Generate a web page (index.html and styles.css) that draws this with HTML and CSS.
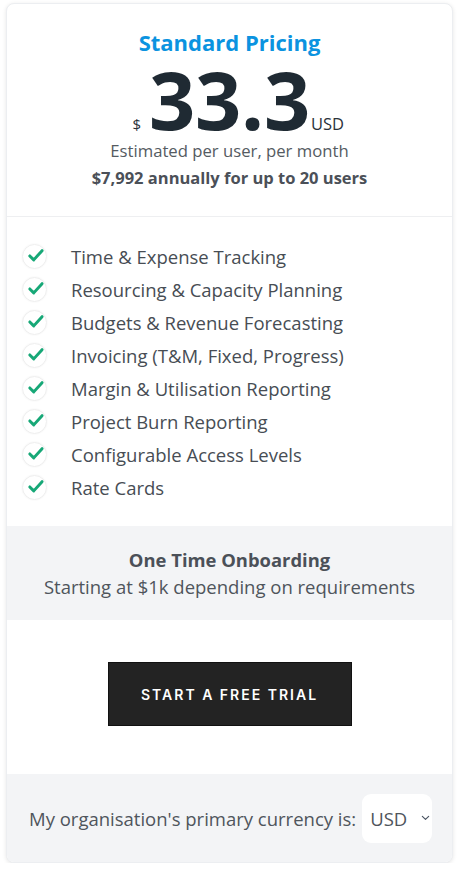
FILE: index.html
```html
<!DOCTYPE html>
<html lang="en">
<head>
<meta charset="utf-8">
<title>Standard Pricing</title>
<link rel="stylesheet" href="styles.css">
</head>
<body>
<div class="card">
  <section class="head">
    <h2 class="title">Standard Pricing</h2>
    <div class="price"><span class="cur">$</span><span class="amount">33.3</span><span class="code">USD</span></div>
    <p class="per">Estimated per user, per month</p>
    <p class="annual">$7,992 annually for up to 20 users</p>
  </section>
  <ul class="features">
    <li><span class="chk"><svg viewBox="0 0 24 24" width="24" height="24"><path d="M5.5 12.5 L10 17 L19.5 6.5" fill="none" stroke="#17a877" stroke-width="3.4" stroke-linecap="round" stroke-linejoin="round"/></svg></span>Time &amp; Expense Tracking</li>
    <li><span class="chk"><svg viewBox="0 0 24 24" width="24" height="24"><path d="M5.5 12.5 L10 17 L19.5 6.5" fill="none" stroke="#17a877" stroke-width="3.4" stroke-linecap="round" stroke-linejoin="round"/></svg></span>Resourcing &amp; Capacity Planning</li>
    <li><span class="chk"><svg viewBox="0 0 24 24" width="24" height="24"><path d="M5.5 12.5 L10 17 L19.5 6.5" fill="none" stroke="#17a877" stroke-width="3.4" stroke-linecap="round" stroke-linejoin="round"/></svg></span>Budgets &amp; Revenue Forecasting</li>
    <li><span class="chk"><svg viewBox="0 0 24 24" width="24" height="24"><path d="M5.5 12.5 L10 17 L19.5 6.5" fill="none" stroke="#17a877" stroke-width="3.4" stroke-linecap="round" stroke-linejoin="round"/></svg></span>Invoicing (T&amp;M, Fixed, Progress)</li>
    <li><span class="chk"><svg viewBox="0 0 24 24" width="24" height="24"><path d="M5.5 12.5 L10 17 L19.5 6.5" fill="none" stroke="#17a877" stroke-width="3.4" stroke-linecap="round" stroke-linejoin="round"/></svg></span>Margin &amp; Utilisation Reporting</li>
    <li><span class="chk"><svg viewBox="0 0 24 24" width="24" height="24"><path d="M5.5 12.5 L10 17 L19.5 6.5" fill="none" stroke="#17a877" stroke-width="3.4" stroke-linecap="round" stroke-linejoin="round"/></svg></span>Project Burn Reporting</li>
    <li><span class="chk"><svg viewBox="0 0 24 24" width="24" height="24"><path d="M5.5 12.5 L10 17 L19.5 6.5" fill="none" stroke="#17a877" stroke-width="3.4" stroke-linecap="round" stroke-linejoin="round"/></svg></span>Configurable Access Levels</li>
    <li><span class="chk"><svg viewBox="0 0 24 24" width="24" height="24"><path d="M5.5 12.5 L10 17 L19.5 6.5" fill="none" stroke="#17a877" stroke-width="3.4" stroke-linecap="round" stroke-linejoin="round"/></svg></span>Rate Cards</li>
  </ul>
  <section class="onboard">
    <p class="ob-title">One Time Onboarding</p>
    <p class="ob-sub">Starting at $1k depending on requirements</p>
  </section>
  <section class="cta">
    <a class="btn" href="#">START A FREE TRIAL</a>
  </section>
  <section class="foot">
    <span class="foot-label">My organisation's primary currency is:</span>
    <span class="select">USD<svg viewBox="0 0 10 6" width="9" height="6"><path d="M1.5 1.2 L5 4.6 L8.5 1.2" fill="none" stroke="#4b5563" stroke-width="1.3" stroke-linecap="round" stroke-linejoin="round"/></svg></span>
  </section>
</div>
</body>
</html>
```
FILE: styles.css
```css
* { box-sizing: border-box; }
html, body { margin: 0; padding: 0; background: #ffffff; }
body {
  font-family: "Open Sans", "Noto Sans", sans-serif;
  color: #4b5563;
}
p, h2, ul { margin: 0; padding: 0; }

.card {
  margin: 3px 0 0 6px;
  width: 447px;
  height: 860px;
  border: 1px solid #eceef1;
  border-radius: 8px;
  box-shadow: 0 1px 4px rgba(0,0,0,0.10);
  background: #fff;
  overflow: hidden;
  display: flex;
  flex-direction: column;
}

.head {
  padding: 24px 0 0;
  height: 213px;
  border-bottom: 1px solid #eeeff1;
  text-align: center;
}
.title {
  font-size: 22px;
  line-height: 28px;
  font-weight: 700;
  color: #0b93e0;
}
.price {
  margin-top: 3px;
  height: 80px;
  line-height: 80px;
  display: grid;
  grid-template-columns: 1fr auto 1fr;
  align-items: baseline;
  color: #1f2a33;
}
.cur { justify-self: end; font-size: 15px; line-height: 1; margin-right: 8px; color: #2a323a; }
.amount { font-size: 81px; font-weight: 700; letter-spacing: -0.3px; line-height: 80px; }
.code { justify-self: start; font-size: 16.5px; line-height: 1; margin-left: 1px; color: #2a323a; }
.per { font-size: 16.7px; line-height: 24px; color: #555b62; }
.annual { margin-top: 3px; font-size: 16.5px; line-height: 24px; font-weight: 700; color: #4b5058; }

.features {
  list-style: none;
  padding: 23px 0 0 15px;
  height: 309px;
}
.features li {
  height: 33px;
  display: flex;
  align-items: center;
  font-size: 18.5px;
  color: #474d54;
}
.chk {
  width: 25px;
  height: 25px;
  border-radius: 50%;
  border: 1px solid #eeeeee;
  box-shadow: 0 0 2px rgba(0,0,0,0.06);
  display: flex;
  align-items: center;
  justify-content: center;
  margin-right: 24px;
  flex: none;
}
.chk svg { width: 21px; height: 21px; margin: -2px 0 0 2px; }

.onboard {
  background: #f3f4f6;
  height: 94px;
  padding-top: 20px;
  text-align: center;
}
.ob-title { font-size: 18.4px; line-height: 27px; font-weight: 700; color: #4b5058; }
.ob-sub { font-size: 18.5px; line-height: 27px; color: #4f555c; }

.cta {
  height: 154px;
  padding-top: 42px;
  display: flex;
  justify-content: center;
  align-items: flex-start;
}
.btn {
  width: 244px;
  height: 64px;
  background: #232323;
  border: 1px solid #111;
  color: #fff;
  text-decoration: none;
  font-family: Inter, "Liberation Sans", sans-serif;
  font-size: 14px;
  font-weight: 600;
  letter-spacing: 2px;
  display: flex;
  align-items: center;
  justify-content: center;
}

.foot {
  flex: 1;
  background: #f3f4f6;
  display: flex;
  align-items: center;
  padding: 0 0 0 22px;
  gap: 6px;
  font-size: 18.5px;
  color: #4f555c;
}
.select {
  width: 70px;
  height: 49px;
  background: #fff;
  border-radius: 9px;
  display: flex;
  align-items: center;
  padding-left: 8px;
  gap: 14px;
  font-size: 18.5px;
  color: #4f555c;
  flex: none;
}
```
